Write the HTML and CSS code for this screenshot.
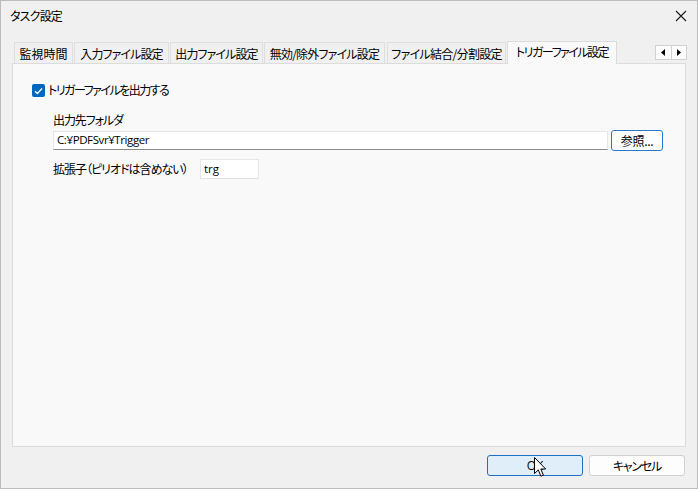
FILE: index.html
```html
<!DOCTYPE html>
<html lang="ja">
<head>
<meta charset="utf-8">
<link rel="stylesheet" href="styles.css">
</head>
<body>
<div class="dialog">
  <div class="titlebar">
    <span class="title">タスク設定</span>
    <svg class="close" width="12" height="12" viewBox="0 0 12 12"><path d="M1 1 L11 11 M11 1 L1 11" stroke="#1a1a1a" stroke-width="1.1" fill="none"/></svg>
  </div>
  <div class="content">
    <div class="tabstrip">
      <div class="tab w1">監視時間</div>
      <div class="tab w2">入力ファイル設定</div>
      <div class="tab w3">出力ファイル設定</div>
      <div class="tab w4">無効/除外ファイル設定</div>
      <div class="tab w5">ファイル結合/分割設定</div>
      <div class="tab active w6">トリガーファイル設定</div>
      <div class="spin">
        <div class="spinbtn"><svg width="4" height="7" viewBox="0 0 4 7"><path d="M4 0 L0 3.5 L4 7 Z" fill="#000"/></svg></div>
        <div class="spinbtn"><svg width="4" height="7" viewBox="0 0 4 7"><path d="M0 0 L4 3.5 L0 7 Z" fill="#000"/></svg></div>
      </div>
    </div>
    <div class="panel">
      <label class="check-row">
        <span class="checkbox"><svg width="9" height="8" viewBox="0 0 9 8"><path d="M1 4.2 L3.4 6.5 L8 1.5" stroke="#fff" stroke-width="1.3" fill="none"/></svg></span>
        <span class="jp check-label">トリガーファイルを出力する</span>
      </label>
      <div class="group">
        <div class="label jp">出力先フォルダ</div>
        <div class="folder-row">
          <div class="input folder">C:¥PDFSvr¥Trigger</div>
          <div class="btn browse jp">参照...</div>
        </div>
        <div class="ext-row">
          <span class="jp ext-label">拡張子（ピリオドは含めない）</span>
          <div class="input ext">trg</div>
        </div>
      </div>
    </div>
  </div>
  <div class="footer">
    <div class="btn ok">OK</div>
    <div class="btn cancel jp">キャンセル</div>
  </div>
  <svg class="cursor" width="13" height="21" viewBox="0 0 13 21"><path d="M0.5 0.5 L0.5 16.5 L4.3 12.9 L6.9 19.2 L9.4 18.2 L6.8 12 L11.7 12 Z" fill="#fff" stroke="#000" stroke-width="1" stroke-linejoin="round"/></svg>
</div>
</body>
</html>
```

FILE: styles.css
```css
* { box-sizing: border-box; }
html, body { margin: 0; padding: 0; }
body {
  width: 698px;
  height: 489px;
  font-family: "Noto Sans CJK JP", "Noto Sans", sans-serif;
  font-size: 12px;
  color: #000;
  background: #f0f0f0;
  overflow: hidden;
}
.jp, .tab, .title { font-feature-settings: "palt"; white-space: nowrap; }
.dialog {
  position: relative;
  width: 698px;
  height: 489px;
  border: 1px solid #bcbcbc;
  background: #f0f0f0;
  display: flex;
  flex-direction: column;
}
.titlebar {
  height: 30px;
  display: flex;
  align-items: center;
  justify-content: space-between;
  padding: 0 9px 0 9px;
  background: #f0f0f0;
}
.title { font-size: 12px; line-height: 14px; letter-spacing: -0.8px; }
.close { margin-right: 1px; }
.content {
  padding: 10px 0 0 11px;
  width: 686px;
}
.tabstrip {
  display: flex;
  align-items: flex-end;
  height: 22px;
  padding-left: 2px;
  position: relative;
  z-index: 1;
}
.tab {
  height: 21px;
  margin-right: 1px;
  border: 1px solid #dedede;
  border-bottom: none;
  background: #f0f0f0;
  display: flex;
  align-items: center;
  justify-content: center;
  font-size: 12px;
  line-height: 14px;
  letter-spacing: -0.9px;
  padding-top: 1px;
}
.tab.w1 { width: 59px; letter-spacing: 0; }
.tab.w2 { width: 95px; }
.tab.w3 { width: 93px; }
.tab.w4 { width: 121px; letter-spacing: -0.8px; }
.tab.w5 { width: 119px; margin-left: 1px; letter-spacing: -0.7px; }
.tab.w6 { width: 110px; letter-spacing: -1.5px; }
.tab.active {
  height: 23px;
  background: #f9f9f9;
  border-color: #dcdcdc;
  margin-bottom: -1px;
  padding-top: 0;
  padding-bottom: 2px;
}
.spin {
  margin-left: auto;
  align-self: flex-start;
  margin-top: 4px;
  display: flex;
  width: 32px;
  height: 15px;
  border: 1px solid #d0d0d0;
  background: #fdfdfd;
}
.spinbtn {
  flex: 1;
  display: flex;
  align-items: center;
  justify-content: center;
}
.spinbtn + .spinbtn { border-left: 1px solid #d0d0d0; }
.panel {
  width: 674px;
  height: 384px;
  border: 1px solid #dcdcdc;
  background: #f9f9f9;
  padding: 20px 0 0 19px;
}
.check-row {
  display: flex;
  align-items: center;
  height: 13px;
  gap: 3px;
}
.checkbox {
  width: 13px;
  height: 13px;
  border-radius: 2px;
  background: #0067c0;
  display: flex;
  align-items: center;
  justify-content: center;
}
.check-label { line-height: 14px; margin-top: -1px; letter-spacing: -1.5px; }
.group { padding: 16px 0 0 21px; }
.label { line-height: 14px; margin-bottom: 3px; letter-spacing: -1.1px; }
.folder-row {
  display: flex;
  align-items: center;
  gap: 3px;
}
.input {
  background: #fff;
  border: 1px solid #e6e6e6;
  border-bottom-color: #8a8a8a;
  height: 19px;
  line-height: 16px;
  padding-left: 3px;
  font-size: 12px;
}
.folder { width: 555px; font-family: "Open Sans", "Noto Sans", sans-serif; font-size: 11.5px; letter-spacing: -0.4px; }
.btn {
  display: flex;
  align-items: center;
  justify-content: center;
  border-radius: 3px;
  font-size: 12px;
}
.browse {
  width: 52px;
  height: 21px;
  border: 1px solid #2a79c9;
  background: #fdfdfd;
  letter-spacing: -0.3px;
}
.ext-row {
  display: flex;
  align-items: center;
  margin-top: 8px;
}
.ext-label { width: 147px; line-height: 14px; letter-spacing: -1px; }
.ext { width: 59px; height: 20px; border-bottom-color: #e0e0e0; font-family: "Open Sans", sans-serif; font-size: 11.5px; line-height: 17px; }
.footer {
  display: flex;
  justify-content: flex-end;
  gap: 6px;
  padding: 8px 12px 0 0;
}
.ok {
  width: 96px;
  height: 21px;
  border: 1px solid #1d6fc2;
  background: #e0eef9;
  font-family: "Open Sans", sans-serif;
}
.cancel {
  width: 96px;
  height: 21px;
  border: 1px solid #d0d0d0;
  background: #fdfdfd;
  letter-spacing: -1.2px;
}
.cursor {
  position: absolute;
  left: 533px;
  top: 456px;
}
```
